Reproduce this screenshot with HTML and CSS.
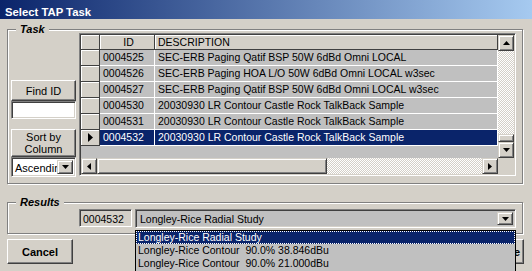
FILE: index.html
```html
<!DOCTYPE html>
<html>
<head>
<meta charset="utf-8">
<link rel="stylesheet" href="styles.css">
</head>
<body>
<div class="window">
  <div class="titlebar"><span class="title">Select TAP Task</span></div>
  <div class="client">
    <div class="group task-group">
      <div class="legend">Task</div>
      <div class="task-body">
        <div class="side">
          <div class="btn find-btn">Find ID</div>
          <div class="textbox find-input"></div>
          <div class="btn sort-btn">Sort by<br>Column</div>
          <div class="combo sort-combo">
            <span class="combo-text">Ascending</span>
            <span class="sbtn drop-btn"><svg width="7" height="4" viewBox="0 0 7 4"><polygon points="0,0 7,0 3.5,4" fill="#000"/></svg></span>
          </div>
        </div>
        <div class="grid">
          <div class="grid-main">
            <div class="table">
              <div class="row head">
                <div class="rh"></div><div class="hc center">ID</div><div class="hc">DESCRIPTION</div>
              </div>
              <div class="row"><div class="rh"></div><div class="c">0004525</div><div class="c">SEC-ERB Paging Qatif BSP 50W 6dBd Omni LOCAL</div></div>
              <div class="row"><div class="rh"></div><div class="c">0004526</div><div class="c">SEC-ERB Paging HOA L/O 50W 6dBd Omni LOCAL w3sec</div></div>
              <div class="row"><div class="rh"></div><div class="c">0004527</div><div class="c">SEC-ERB Paging Qatif BSP 50W 6dBd Omni LOCAL w3sec</div></div>
              <div class="row"><div class="rh"></div><div class="c">0004530</div><div class="c">20030930 LR Contour Castle Rock TalkBack Sample</div></div>
              <div class="row"><div class="rh"></div><div class="c">0004531</div><div class="c">20030930 LR Contour Castle Rock TalkBack Sample</div></div>
              <div class="row sel"><div class="rh"><svg width="5" height="9" viewBox="0 0 5 9"><polygon points="0,0 5,4.5 0,9" fill="#000"/></svg></div><div class="c">0004532</div><div class="c">20030930 LR Contour Castle Rock TalkBack Sample</div></div>
            </div>
            <div class="vscroll">
              <span class="sbtn"><svg width="7" height="4" viewBox="0 0 7 4"><polygon points="3.5,0 7,4 0,4" fill="#000"/></svg></span>
              <span class="track"></span>
              <span class="thumb-v"></span>
              <span class="sbtn"><svg width="7" height="4" viewBox="0 0 7 4"><polygon points="0,0 7,0 3.5,4" fill="#000"/></svg></span>
            </div>
          </div>
          <div class="hrow">
            <div class="hscroll">
              <span class="sbtn"><svg width="4" height="7" viewBox="0 0 4 7"><polygon points="4,0 4,7 0,3.5" fill="#000"/></svg></span>
              <span class="thumb-h"></span>
              <span class="track"></span>
              <span class="sbtn"><svg width="4" height="7" viewBox="0 0 4 7"><polygon points="0,0 4,3.5 0,7" fill="#000"/></svg></span>
            </div>
            <div class="corner"></div>
          </div>
        </div>
      </div>
    </div>

    <div class="group results-group">
      <div class="legend">Results</div>
      <div class="results-body">
        <div class="textbox ro id-box">0004532</div>
        <div class="combo result-combo">
          <span class="combo-text">Longley-Rice Radial Study</span>
          <span class="sbtn drop-btn"><svg width="7" height="4" viewBox="0 0 7 4"><polygon points="0,0 7,0 3.5,4" fill="#000"/></svg></span>
        </div>
      </div>
    </div>

    <div class="buttons">
      <div class="btn cancel">Cancel</div>
      <div class="btn ok">Done</div>
    </div>
  </div>

  <div class="droplist">
    <div class="item hl">Longley-Rice Radial Study</div>
    <div class="item">Longley-Rice Contour  90.0% 38.846dBu</div>
    <div class="item">Longley-Rice Contour  90.0% 21.000dBu</div>
  </div>
</div>
</body>
</html>
```

FILE: styles.css
```css
* { box-sizing: border-box; }
html, body { margin: 0; padding: 0; background: #d4d0c8; }
body { font-family: "Liberation Sans", Arial, sans-serif; font-size: 10.5px; color: #000; }

.window {
  position: relative;
  width: 532px;
  height: 271px;
  overflow: hidden;
  background: #d4d0c8;
}

.titlebar {
  height: 19px;
  background: linear-gradient(to right, #0a246a, #a6caf0);
  padding: 6px 0 0 5px;
}
.title {
  display: block;
  color: #fff;
  font-weight: bold;
  font-size: 11.3px;
  line-height: 13px;
}

.client { padding-left: 7px; }

.group {
  width: 516px;
  border: 1px solid #808080;
  box-shadow: inset 1px 1px 0 #fff, 1px 1px 0 #fff;
}
.legend {
  width: max-content;
  margin: -7px 0 0 8px;
  padding: 0 4px;
  background: #d4d0c8;
  font-weight: bold;
  font-style: italic;
  font-size: 11px;
  line-height: 12px;
  height: 12px;
}

.task-group { margin-top: 10px; height: 155px; }
.task-body { display: flex; gap: 3px; padding: 0 0 0 3px; margin-top: -7px; }

.side { width: 65px; display: flex; flex-direction: column; padding-top: 52px; }

.btn {
  background: #d4d0c8;
  border: 1px solid;
  border-color: #fff #404040 #404040 #fff;
  box-shadow: inset -1px -1px 0 #808080, inset 1px 1px 0 #d4d0c8;
  display: flex;
  align-items: center;
  justify-content: center;
  text-align: center;
  line-height: 12px;
}
.find-btn { height: 21px; font-size: 11px; }
.find-input { height: 18px; }
.sort-btn { height: 28px; margin-top: 10px; font-size: 11px; }

.textbox {
  background: #fff;
  border: 1px solid;
  border-color: #808080 #fff #fff #808080;
  box-shadow: inset 1px 1px 0 #404040, inset -1px -1px 0 #d4d0c8;
}
.textbox.ro { background: #d4d0c8; padding: 3px 0 0 3px; line-height: 12px; }

.combo {
  display: flex;
  align-items: stretch;
  background: #fff;
  border: 1px solid;
  border-color: #808080 #fff #fff #808080;
  box-shadow: inset 1px 1px 0 #404040, inset -1px -1px 0 #d4d0c8;
  padding: 2px;
}
.combo-text { flex: 1; overflow: hidden; white-space: nowrap; padding: 1px 0 0 1px; line-height: 14px; }
.sort-combo { height: 20px; }
.sort-combo .combo-text { font-size: 11px; }

.sbtn {
  width: 16px;
  height: 16px;
  flex: none;
  background: #d4d0c8;
  border: 1px solid;
  border-color: #d4d0c8 #404040 #404040 #d4d0c8;
  box-shadow: inset 1px 1px 0 #fff, inset -1px -1px 0 #808080;
  display: flex;
  align-items: center;
  justify-content: center;
}
.sbtn svg { display: block; }
.combo .drop-btn { height: auto; }

.grid {
  margin-top: 5px;
  width: 437px;
  height: 143px;
  border: 1px solid;
  border-color: #808080 #fff #fff #808080;
  box-shadow: inset 1px 1px 0 #404040, inset -1px -1px 0 #d4d0c8;
  padding: 1px;
  display: flex;
  flex-direction: column;
}
.grid-main { display: flex; height: 123px; }
.table { flex: 1; background: #c0c0c0; }
.row { display: grid; grid-template-columns: 19px 55px 1fr; height: 16px; }
.row.head { height: 15px; }
.rh, .hc {
  background: #d4d0c8;
  border-right: 1px solid #404040;
  border-bottom: 1px solid #404040;
  box-shadow: inset 1px 1px 0 #fff;
  display: flex;
  align-items: center;
  justify-content: center;
}
.hc { justify-content: flex-start; padding: 0 0 0 3px; line-height: 13px; }
.hc.center { justify-content: center; }
.c {
  border-right: 1px solid #fff;
  border-bottom: 1px solid #fff;
  padding: 1px 0 0 3px;
  line-height: 13px;
  white-space: nowrap;
  overflow: hidden;
}
.row.sel .c { background: #0a246a; color: #fff; }

.vscroll { width: 16px; display: flex; flex-direction: column; }
.track {
  flex: 1;
  background: repeating-conic-gradient(#fff 0 25%, #d4d0c8 0 50%) 0 0 / 2px 2px;
}
.thumb-v { height: 8px; background: #d4d0c8; border: 1px solid; border-color: #d4d0c8 #404040 #404040 #d4d0c8; box-shadow: inset 1px 1px 0 #fff, inset -1px -1px 0 #808080; }

.hrow { display: flex; height: 16px; }
.hscroll { flex: 1; display: flex; }
.thumb-h { width: 230px; background: #d4d0c8; border: 1px solid; border-color: #d4d0c8 #404040 #404040 #d4d0c8; box-shadow: inset 1px 1px 0 #fff, inset -1px -1px 0 #808080; }
.corner { width: 16px; background: #d4d0c8; }

.results-group { margin-top: 18px; height: 32px; }
.results-body { display: flex; gap: 3px; padding-left: 71px; margin-top: 1px; }
.id-box { width: 53px; height: 18px; }
.result-combo { width: 381px; height: 19px; background: #c0c0c0; padding: 2px 2px 2px 2px; }
.result-combo .combo-text { padding-left: 2px; line-height: 13px; }

.buttons { display: flex; justify-content: space-between; width: 517px; margin-top: 5px; }
.cancel { width: 66px; height: 25px; font-weight: bold; font-size: 11px; }
.ok { width: 80px; height: 25px; font-weight: bold; font-size: 11px; justify-content: flex-end; padding-right: 3px; }

.droplist {
  position: absolute;
  left: 135px;
  top: 230px;
  width: 381px;
  height: 50px;
  background: #c0c0c0;
  border: 1px solid #000;
}
.item { height: 13px; line-height: 13px; padding-left: 2px; white-space: pre; }
.item.hl { background: #0a246a; color: #fff; outline: 1px dotted #fff; outline-offset: -1px; }
```
